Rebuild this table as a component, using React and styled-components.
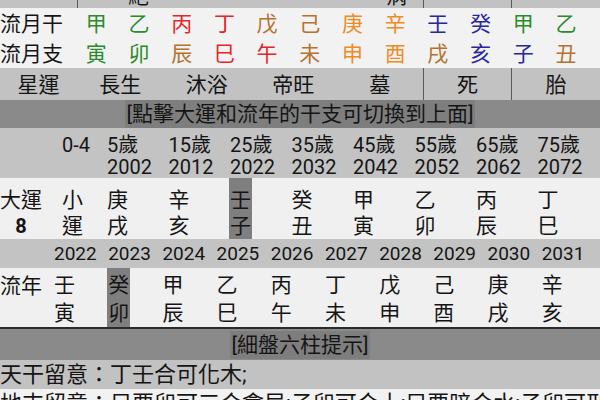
import React from 'react';
import styled, { createGlobalStyle } from 'styled-components';

const GlobalStyle = createGlobalStyle`
  body {
    margin: 0;
    background: #f1f1f1;
  }
`;

const STEM_COLORS = {
  wood: '#2b8a2b',
  fire: '#e3262b',
  earth: '#b5732e',
  metal: '#f08a22',
  water: '#27279a',
};

const monthStems = [
  ['甲', 'wood'], ['乙', 'wood'], ['丙', 'fire'], ['丁', 'fire'], ['戊', 'earth'], ['己', 'earth'],
  ['庚', 'metal'], ['辛', 'metal'], ['壬', 'water'], ['癸', 'water'], ['甲', 'wood'], ['乙', 'wood'],
];

const monthBranches = [
  ['寅', 'wood'], ['卯', 'wood'], ['辰', 'earth'], ['巳', 'fire'], ['午', 'fire'], ['未', 'earth'],
  ['申', 'metal'], ['酉', 'metal'], ['戌', 'earth'], ['亥', 'water'], ['子', 'water'], ['丑', 'earth'],
];

const luck = [
  { age: '5歲', year: '2002', gz: ['庚', '戌'] },
  { age: '15歲', year: '2012', gz: ['辛', '亥'] },
  { age: '25歲', year: '2022', gz: ['壬', '子'], active: true },
  { age: '35歲', year: '2032', gz: ['癸', '丑'] },
  { age: '45歲', year: '2042', gz: ['甲', '寅'] },
  { age: '55歲', year: '2052', gz: ['乙', '卯'] },
  { age: '65歲', year: '2062', gz: ['丙', '辰'] },
  { age: '75歲', year: '2072', gz: ['丁', '巳'] },
];

const flowYears = [
  { year: '2022', gz: ['壬', '寅'] },
  { year: '2023', gz: ['癸', '卯'], active: true },
  { year: '2024', gz: ['甲', '辰'] },
  { year: '2025', gz: ['乙', '巳'] },
  { year: '2026', gz: ['丙', '午'] },
  { year: '2027', gz: ['丁', '未'] },
  { year: '2028', gz: ['戊', '申'] },
  { year: '2029', gz: ['己', '酉'] },
  { year: '2030', gz: ['庚', '戌'] },
  { year: '2031', gz: ['辛', '亥'] },
];

const Page = styled.div`
  width: 600px;
  height: 400px;
  overflow: hidden;
  font-family: Roboto, "Noto Sans CJK TC", sans-serif;
  color: #151515;
  background: #f1f1f1;
`;

/* 星運 style row: label | four cells | one | one */
const StarRow = styled.div`
  display: grid;
  grid-template-columns: 77px 346px 88px 89px;
  height: ${(p) => (p.$cropped ? 8 : 32)}px;
  overflow: hidden;
  background: #c2c2c2;
  font-size: 21px;
  line-height: ${(p) => (p.$cropped ? 24 : 34)}px;
`;

const StarCell = styled.div`
  display: flex;
  overflow: hidden;
  align-items: ${(p) => (p.$cropped ? 'flex-end' : 'center')};
  justify-content: ${(p) => p.$justify || 'center'};
  padding: ${(p) => p.$pad || '0'};
  border-left: ${(p) => (p.$first ? 'none' : '1px solid #5a5a5a')};
`;

const StarQuad = styled.div`
  display: grid;
  grid-template-columns: repeat(4, 1fr);
  justify-items: center;
  align-items: center;
`;

const MonthRow = styled.div`
  display: grid;
  grid-template-columns: 75px repeat(12, 42.7px);
  height: 30px;
  align-items: center;
  font-size: 21px;
  line-height: 33px;
  background: #f2f2f2;
`;

const MonthLabel = styled.div`
  white-space: nowrap;
`;

const Glyph = styled.div`
  text-align: center;
  color: ${(p) => STEM_COLORS[p.$el]};
`;

const Banner = styled.div`
  display: flex;
  justify-content: center;
  align-items: center;
  height: ${(p) => p.$h}px;
  background: #8a8a8a;
  font-size: 21px;
  border-top: ${(p) => (p.$rule ? '2px solid #2a2a2a' : 'none')};
`;

const BannerText = styled.span`
  background: #7e7e7e;
  padding: 0 1px;
  line-height: 28px;
`;

const LuckGrid = styled.div`
  display: grid;
  grid-template-columns: 62px 45px repeat(8, 61.5px);
  height: ${(p) => p.$h}px;
  background: ${(p) => p.$bg};
`;

const YearGrid = styled.div`
  display: grid;
  grid-template-columns: 54px repeat(10, 54.2px);
  height: ${(p) => p.$h}px;
  background: ${(p) => p.$bg};
`;

const AgeCell = styled.div`
  font-size: 20px;
  line-height: 22px;
  padding-top: 6px;
  white-space: nowrap;
`;

const YearCell = styled.div`
  font-size: 19px;
  line-height: 29px;
  white-space: nowrap;
`;

const RowLabel = styled.div`
  font-size: 21px;
  line-height: 26px;
  padding-top: ${(p) => p.$top}px;
  text-align: center;
  white-space: nowrap;
  justify-self: start;
`;

const LabelNum = styled.div`
  font-weight: bold;
  font-family: Roboto, sans-serif;
  font-size: 20px;
`;

const PillarCell = styled.div`
  display: flex;
`;

const Pillar = styled.div`
  display: flex;
  flex-direction: column;
  margin-left: -1px;
  padding: ${(p) => p.$top}px 1px 0;
  font-size: 21px;
  line-height: ${(p) => p.$lh}px;
  background: ${(p) => (p.$active ? '#7f7f7f' : 'transparent')};
`;

const TipRow = styled.div`
  height: 29px;
  font-size: 22px;
  line-height: 29px;
  white-space: nowrap;
  overflow: hidden;
  background: ${(p) => p.$bg};
  border-bottom: ${(p) => (p.$line ? '1px solid #e6e6e6' : 'none')};
`;

function StarBand({ cropped, label, quad, pair, single, last }) {
  return (
    <StarRow $cropped={cropped}>
      <StarCell $first $cropped={cropped}>{label}</StarCell>
      {quad ? (
        <StarQuad>{quad.map((s) => <span key={s}>{s}</span>)}</StarQuad>
      ) : (
        <StarCell $cropped={cropped} $justify="space-between" $pad="0 16px 0 50px">
          {pair.map((s) => <span key={s}>{s}</span>)}
        </StarCell>
      )}
      <StarCell $cropped={cropped}>{single}</StarCell>
      <StarCell $cropped={cropped}>{last}</StarCell>
    </StarRow>
  );
}

export default function App() {
  return (
    <Page>
      <GlobalStyle />
      <StarBand cropped label="" pair={['絕', '病']} single="" last="" />

      <MonthRow>
        <MonthLabel>流月干</MonthLabel>
        {monthStems.map(([g, el], i) => <Glyph key={i} $el={el}>{g}</Glyph>)}
      </MonthRow>
      <MonthRow>
        <MonthLabel>流月支</MonthLabel>
        {monthBranches.map(([g, el], i) => <Glyph key={i} $el={el}>{g}</Glyph>)}
      </MonthRow>

      <StarBand label="星運" quad={['長生', '沐浴', '帝旺', '墓']} single="死" last="胎" />

      <Banner $h={28}>
        <BannerText>[點擊大運和流年的干支可切換到上面]</BannerText>
      </Banner>

      <LuckGrid $h={50} $bg="#c3c3c3">
        <div />
        <AgeCell>0-4</AgeCell>
        {luck.map((l) => (
          <AgeCell key={l.year}>{l.age}<br />{l.year}</AgeCell>
        ))}
      </LuckGrid>

      <LuckGrid $h={61} $bg="#f0f0f0">
        <RowLabel $top={9}>
          大運
          <LabelNum>8</LabelNum>
        </RowLabel>
        <PillarCell>
          <Pillar $top={9} $lh={26}><span>小</span><span>運</span></Pillar>
        </PillarCell>
        {luck.map((l) => (
          <PillarCell key={l.year}>
            <Pillar $top={9} $lh={26} $active={l.active}>
              <span>{l.gz[0]}</span>
              <span>{l.gz[1]}</span>
            </Pillar>
          </PillarCell>
        ))}
      </LuckGrid>

      <YearGrid $h={29} $bg="#c3c3c3">
        <div />
        {flowYears.map((y) => <YearCell key={y.year}>{y.year}</YearCell>)}
      </YearGrid>

      <YearGrid $h={59} $bg="#f0f0f0">
        <RowLabel $top={5}>流年</RowLabel>
        {flowYears.map((y) => (
          <PillarCell key={y.year}>
            <Pillar $top={3} $lh={28} $active={y.active}>
              <span>{y.gz[0]}</span>
              <span>{y.gz[1]}</span>
            </Pillar>
          </PillarCell>
        ))}
      </YearGrid>

      <Banner $h={31} $rule>
        <BannerText>[細盤六柱提示]</BannerText>
      </Banner>

      <TipRow $bg="#c2c2c2">天干留意：丁壬合可化木;</TipRow>
      <TipRow $bg="#f2f2f2">地支留意：只要卯可三合會局;子卯可合土;只要暗合水;子卯可刑</TipRow>
    </Page>
  );
}
